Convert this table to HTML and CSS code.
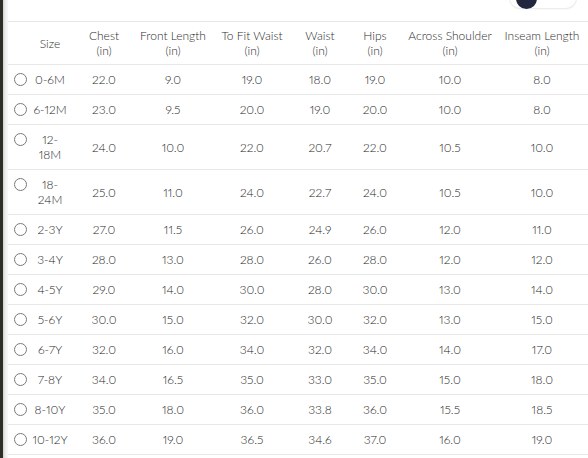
FILE: index.html
```html
<!DOCTYPE html>
<html>
<head>
<meta charset="utf-8">
<link rel="stylesheet" href="styles.css">
</head>
<body>
<div class="frame">
  <div class="edge"></div>
  <div class="content">
    <div class="topbar">
      <div class="toggle"><span class="knob"></span></div>
    </div>
    <table class="chart">
      <colgroup>
        <col class="c-size"><col class="c-chest"><col class="c-front"><col class="c-fit"><col class="c-waist"><col class="c-hips"><col class="c-shoulder"><col class="c-inseam">
      </colgroup>
      <thead>
        <tr>
          <th class="th-size">Size</th>
          <th>Chest<br>(in)</th>
          <th>Front Length<br>(in)</th>
          <th>To Fit Waist<br>(in)</th>
          <th>Waist<br>(in)</th>
          <th>Hips<br>(in)</th>
          <th>Across Shoulder<br>(in)</th>
          <th class="th-last">Inseam Length<br>(in)</th>
        </tr>
      </thead>
      <tbody>
        <tr><td class="size"><div class="opt"><span class="radio"></span><span class="lbl">0-6M</span></div></td><td>22.0</td><td>9.0</td><td>19.0</td><td>18.0</td><td>19.0</td><td>10.0</td><td class="last">8.0</td></tr>
        <tr><td class="size"><div class="opt"><span class="radio"></span><span class="lbl">6-12M</span></div></td><td>23.0</td><td>9.5</td><td>20.0</td><td>19.0</td><td>20.0</td><td>10.0</td><td class="last">8.0</td></tr>
        <tr><td class="size"><div class="opt"><span class="radio"></span><span class="lbl">12-18M</span></div></td><td>24.0</td><td>10.0</td><td>22.0</td><td>20.7</td><td>22.0</td><td>10.5</td><td class="last">10.0</td></tr>
        <tr><td class="size"><div class="opt"><span class="radio"></span><span class="lbl">18-24M</span></div></td><td>25.0</td><td>11.0</td><td>24.0</td><td>22.7</td><td>24.0</td><td>10.5</td><td class="last">10.0</td></tr>
        <tr><td class="size"><div class="opt"><span class="radio"></span><span class="lbl">2-3Y</span></div></td><td>27.0</td><td>11.5</td><td>26.0</td><td>24.9</td><td>26.0</td><td>12.0</td><td class="last">11.0</td></tr>
        <tr><td class="size"><div class="opt"><span class="radio"></span><span class="lbl">3-4Y</span></div></td><td>28.0</td><td>13.0</td><td>28.0</td><td>26.0</td><td>28.0</td><td>12.0</td><td class="last">12.0</td></tr>
        <tr><td class="size"><div class="opt"><span class="radio"></span><span class="lbl">4-5Y</span></div></td><td>29.0</td><td>14.0</td><td>30.0</td><td>28.0</td><td>30.0</td><td>13.0</td><td class="last">14.0</td></tr>
        <tr><td class="size"><div class="opt"><span class="radio"></span><span class="lbl">5-6Y</span></div></td><td>30.0</td><td>15.0</td><td>32.0</td><td>30.0</td><td>32.0</td><td>13.0</td><td class="last">15.0</td></tr>
        <tr><td class="size"><div class="opt"><span class="radio"></span><span class="lbl">6-7Y</span></div></td><td>32.0</td><td>16.0</td><td>34.0</td><td>32.0</td><td>34.0</td><td>14.0</td><td class="last">17.0</td></tr>
        <tr><td class="size"><div class="opt"><span class="radio"></span><span class="lbl">7-8Y</span></div></td><td>34.0</td><td>16.5</td><td>35.0</td><td>33.0</td><td>35.0</td><td>15.0</td><td class="last">18.0</td></tr>
        <tr><td class="size"><div class="opt"><span class="radio"></span><span class="lbl">8-10Y</span></div></td><td>35.0</td><td>18.0</td><td>36.0</td><td>33.8</td><td>36.0</td><td>15.5</td><td class="last">18.5</td></tr>
        <tr><td class="size"><div class="opt"><span class="radio"></span><span class="lbl">10-12Y</span></div></td><td>36.0</td><td>19.0</td><td>36.5</td><td>34.6</td><td>37.0</td><td>16.0</td><td class="last">19.0</td></tr>
      </tbody>
    </table>
  </div>
</div>
</body>
</html>
```
FILE: styles.css
```css
html, body {
  margin: 0;
  padding: 0;
  background: #fff;
}
body {
  font-family: Lato, "Open Sans", sans-serif;
  font-size: 12px;
  font-weight: 300;
  font-variant-numeric: proportional-nums;
  color: #1e1e1e;
  overflow: hidden;
}
.frame {
  display: flex;
  width: 588px;
  height: 458px;
  overflow: hidden;
}
.edge {
  flex: 0 0 8px;
  background: linear-gradient(to right, #2c3024 0, #2c3024 3px, #cfcfcf 3px, #ececec 5px, #f8f8f8 8px);
}
.content {
  flex: 1;
  min-width: 0;
}
.topbar {
  height: 21px;
  display: flex;
  justify-content: flex-end;
  padding-right: 12px;
  overflow: hidden;
}
.toggle {
  width: 60px;
  height: 20px;
  margin-top: -12px;
  border-radius: 10px;
  background: #fff;
  box-shadow: 0 0 0 1px #ececec, 0 1px 2px rgba(0,0,0,0.08);
  display: flex;
  align-items: center;
  padding-left: 6px;
}
.knob {
  width: 21px;
  height: 21px;
  border-radius: 50%;
  background: #23263f;
}
.chart {
  width: 580px;
  border-collapse: collapse;
  table-layout: fixed;
}
.c-size { width: 70px; }
.c-chest { width: 52px; }
.c-front { width: 86px; }
.c-fit { width: 72px; }
.c-waist { width: 64px; }
.c-hips { width: 46px; }
.c-shoulder { width: 104px; }
.c-inseam { width: 86px; }
.chart th {
  font-weight: 300;
  color: #2e2e2e;
  line-height: 15px;
  padding: 6px 0 6px;
  text-align: center;
  vertical-align: middle;
  border-top: 1px solid #e8e8e8;
  border-bottom: 1px solid #e8e8e8;
  white-space: nowrap;
}
.chart .th-size { padding-left: 14px; }
.chart .th-last { padding-right: 6px; }
.chart td {
  line-height: 15px;
  padding: 7px 0;
  text-align: center;
  vertical-align: middle;
  border-bottom: 1px solid #e8e8e8;
}
.chart td.last { padding-right: 6px; }
.chart td.size {
  padding-left: 6px;
  vertical-align: top;
  text-align: left;
}
.opt {
  display: flex;
  align-items: flex-start;
  gap: 4px;
}
.radio {
  flex: 0 0 auto;
  width: 11px;
  height: 11px;
  margin-top: 1px;
  border: 1px solid #7a7a7a;
  border-radius: 50%;
  background: #fff;
}
.lbl {
  width: 38px;
  text-align: center;
}
```
